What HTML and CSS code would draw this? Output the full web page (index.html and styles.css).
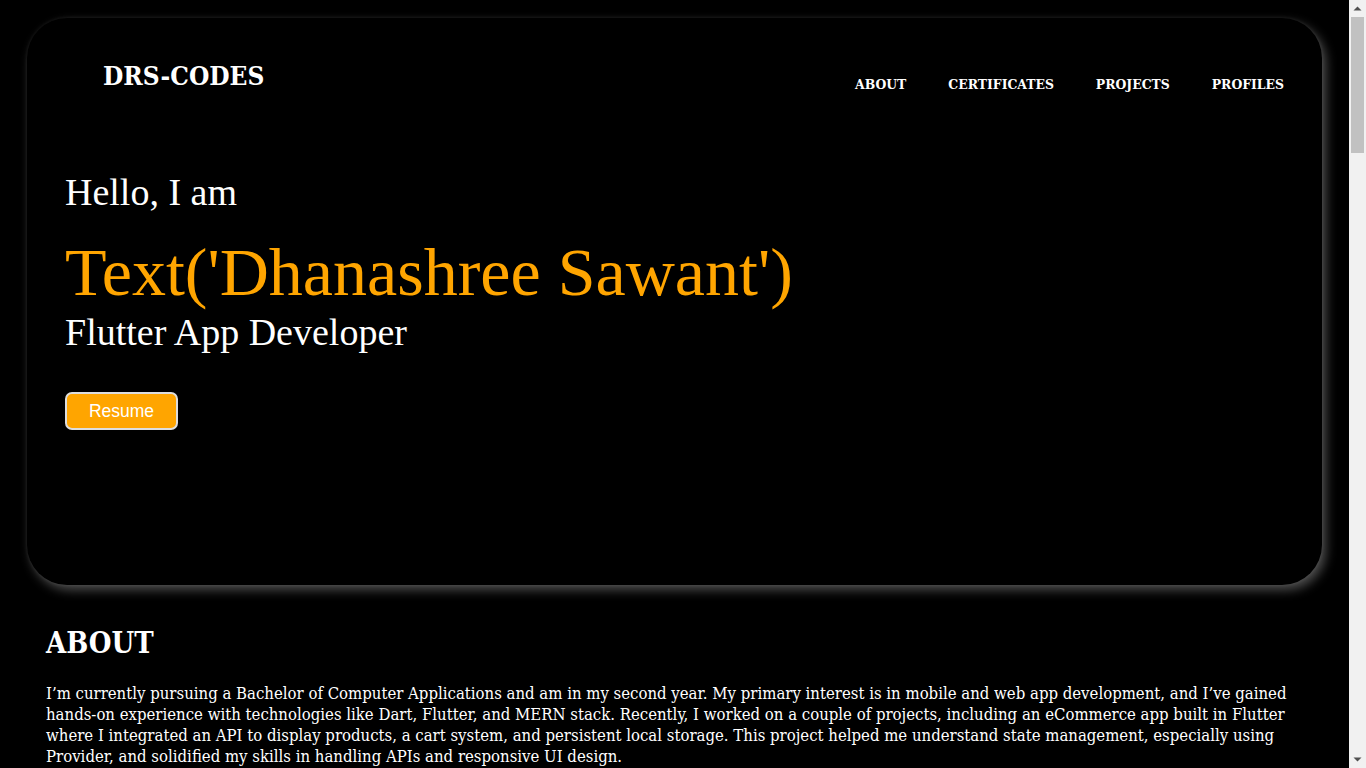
FILE: index.html
```html
<!DOCTYPE html>
<html lang="en">
<head>
<meta charset="utf-8">
<title>DRS-CODES</title>
<link rel="stylesheet" href="styles.css">
</head>
<body>
<section class="hero">
  <header class="topbar">
    <div class="logo">DRS-CODES</div>
    <nav class="nav">
      <a href="#about">ABOUT</a>
      <a href="#certificates">CERTIFICATES</a>
      <a href="#projects">PROJECTS</a>
      <a href="#profiles">PROFILES</a>
    </nav>
  </header>
  <div class="intro">
    <p class="hello">Hello, I am</p>
    <h1 class="name">Text('Dhanashree Sawant')</h1>
    <p class="role">Flutter App Developer</p>
    <button class="resume">Resume</button>
  </div>
</section>
<section class="about" id="about">
  <h2>ABOUT</h2>
  <p>I’m currently pursuing a Bachelor of Computer Applications and am in my second year. My primary interest is in mobile and web app development, and I’ve gained hands-on experience with technologies like Dart, Flutter, and MERN stack. Recently, I worked on a couple of projects, including an eCommerce app built in Flutter where I integrated an API to display products, a cart system, and persistent local storage. This project helped me understand state management, especially using Provider, and solidified my skills in handling APIs and responsive UI design.</p>
</section>
<div class="scrollbar" aria-hidden="true">
  <svg class="arrow" width="17" height="17" viewBox="0 0 17 17"><path d="M4.5 10.5 L8.5 6.5 L12.5 10.5 Z" fill="#505050"/></svg>
  <div class="track"><div class="thumb"></div></div>
  <svg class="arrow" width="17" height="17" viewBox="0 0 17 17"><path d="M4.5 6.5 L8.5 10.5 L12.5 6.5 Z" fill="#505050"/></svg>
</div>
</body>
</html>
```
FILE: styles.css
```css
html, body {
  margin: 0;
  padding: 0;
  background: #000;
  color: #fff;
}
body {
  font-family: "DejaVu Serif Condensed", "DejaVu Serif", serif;
  padding: 18px 44px 40px 27px;
}
.scrollbar {
  position: fixed;
  top: 0;
  right: 0;
  width: 17px;
  height: 100vh;
  background: #f1f1f1;
  display: flex;
  flex-direction: column;
}
.arrow {
  display: block;
  flex: none;
}
.track {
  flex: 1;
  padding: 0 2px;
}
.thumb {
  height: 136px;
  background: #c1c1c1;
}
.hero {
  height: 567px;
  border-radius: 40px;
  background: #000;
  box-shadow: 4px 5px 11px rgba(255, 255, 255, 0.3), 0 0 4px rgba(255, 255, 255, 0.08);
  display: flex;
  flex-direction: column;
}
.topbar {
  display: flex;
  justify-content: space-between;
  align-items: flex-start;
  padding: 40px 38px 0 76px;
}
.logo {
  font-size: 26px;
  font-weight: bold;
  line-height: 36px;
}
.nav {
  display: flex;
  gap: 42px;
  padding-top: 18px;
}
.nav a {
  color: #fff;
  text-decoration: none;
  font-weight: bold;
  font-size: 13.8px;
}
.intro {
  padding: 76px 0 0 38px;
  font-family: "Liberation Serif", "Times New Roman", serif;
}
.hello {
  margin: 0;
  font-size: 38px;
  line-height: 44px;
}
.name {
  margin: 20px 0 0 0;
  font-size: 68px;
  font-weight: normal;
  color: #ffa500;
  line-height: 76px;
}
.role {
  margin: 0;
  font-size: 38px;
  line-height: 44px;
}
.resume {
  margin-top: 38px;
  width: 113px;
  height: 38px;
  background: #ffa500;
  color: #fff;
  font-family: "Liberation Sans", Arial, sans-serif;
  font-size: 17.5px;
  border: 2px solid #ddd;
  border-radius: 7px;
  cursor: pointer;
}
.about {
  padding: 40px 19px 0 19px;
}
.about h2 {
  margin: 0 0 22px 0;
  font-size: 29px;
  line-height: 36px;
}
.about p {
  margin: 0 0 16px 0;
  font-size: 16.6px;
  line-height: 21px;
}
```
